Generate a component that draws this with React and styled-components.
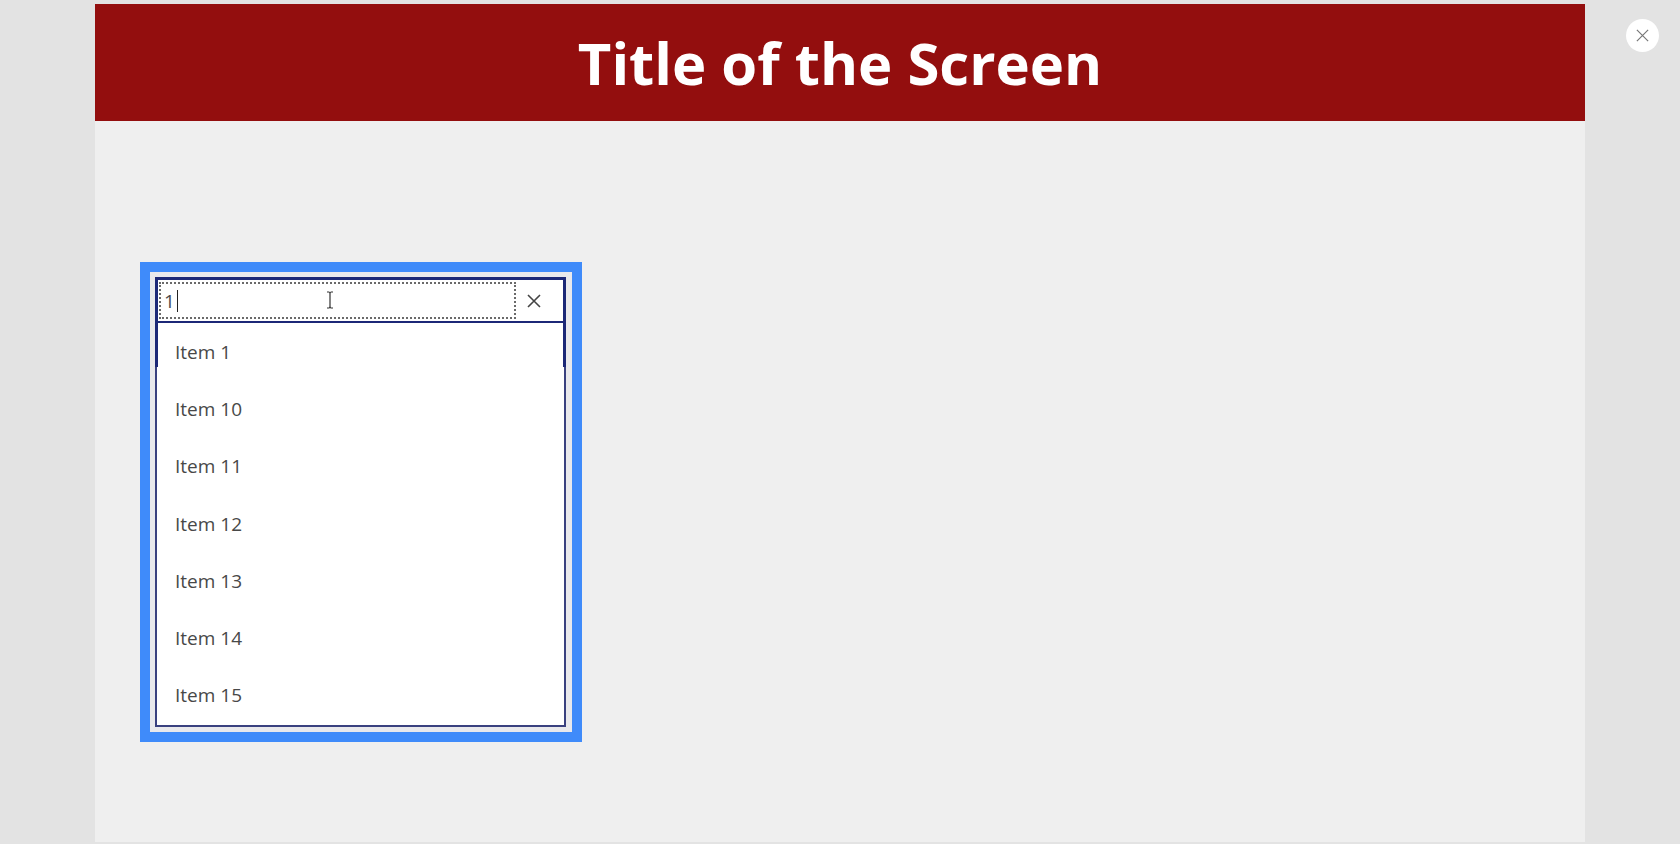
import React from 'react';
import styled, { createGlobalStyle } from 'styled-components';

const GlobalStyle = createGlobalStyle`
  html, body {
    margin: 0;
    padding: 0;
    background: #e3e3e3;
    font-family: "Open Sans", "Noto Sans", sans-serif;
  }
`;

const Page = styled.div`
  display: flex;
  width: 1680px;
  height: 844px;
  overflow: hidden;
`;

const Gutter = styled.div`
  width: 95px;
  flex-shrink: 0;
  padding: 19px 0 0 ${props => props.inset || 0}px;
  box-sizing: border-box;
`;

const Canvas = styled.div`
  display: flex;
  flex-direction: column;
  width: 1490px;
  margin-top: 4px;
  height: 838px;
  background: #efefef;
`;

const Header = styled.header`
  display: flex;
  align-items: center;
  justify-content: center;
  height: 117px;
  flex-shrink: 0;
  background: #930e0e;
`;

const Title = styled.h1`
  margin: 0;
  color: #ffffff;
  font-size: 58px;
  font-weight: 700;
  letter-spacing: 0;
  line-height: 1;
`;

const Body = styled.main`
  padding: 141px 0 0 45px;
`;

const SelectionFrame = styled.div`
  position: relative;
  width: 442px;
  height: 480px;
  box-sizing: border-box;
  border: 10px solid #3f8bfa;
  padding: 5px 6px 5px 5px;
  background: #e9e9ec;
`;

const Combo = styled.div`
  display: flex;
  flex-direction: column;
  height: 100%;
  box-sizing: border-box;
  background: #ffffff;
`;

const SearchRow = styled.div`
  display: flex;
  align-items: center;
  height: 46px;
  box-sizing: border-box;
  border: 3px solid #1c2877;
  border-bottom-width: 2px;
  padding: 3px 0 3px 1px;
`;

const SearchField = styled.div`
  position: relative;
  display: flex;
  align-items: center;
  width: 357px;
  height: 37px;
  box-sizing: border-box;
  border: 2px dotted #6a6a6a;
  padding-left: 3px;
  font-size: 19px;
  color: #4a4a4a;
`;

const Caret = styled.span`
  display: inline-block;
  width: 1px;
  height: 22px;
  margin-left: 2px;
  background: #222;
`;

const Cursor = styled.svg`
  position: absolute;
  left: 165px;
  top: 7px;
`;

const ClearButton = styled.button`
  display: flex;
  align-items: center;
  justify-content: center;
  flex: 1;
  height: 100%;
  border: none;
  background: transparent;
  padding: 0 11px 0 0;
  cursor: pointer;
`;

const List = styled.ul`
  position: relative;
  flex: 1;
  margin: 0;
  padding: 0;
  list-style: none;
  border: 2px solid #3a417f;
  border-top: none;

  &::before {
    content: '';
    position: absolute;
    left: -2px;
    top: 0;
    width: 3px;
    height: 44px;
    background: #1c2877;
  }
  &::after {
    content: '';
    position: absolute;
    right: -2px;
    top: 0;
    width: 3px;
    height: 44px;
    background: #1c2877;
  }
`;

const Item = styled.li`
  display: flex;
  align-items: center;
  height: 57.3px;
  padding-left: 18px;
  font-size: 19px;
  color: #484848;
`;

const CloseCircle = styled.button`
  display: flex;
  align-items: center;
  justify-content: center;
  width: 33px;
  height: 33px;
  border-radius: 50%;
  border: none;
  background: #ffffff;
  padding: 0;
  cursor: pointer;
`;

const items = ['Item 1', 'Item 10', 'Item 11', 'Item 12', 'Item 13', 'Item 14', 'Item 15'];

function XIcon({ size, color, width }) {
  return (
    <svg width={size} height={size} viewBox="0 0 16 16">
      <path d="M2 2 L14 14 M14 2 L2 14" stroke={color} strokeWidth={width} fill="none" />
    </svg>
  );
}

export default function App() {
  return (
    <>
      <GlobalStyle />
      <Page>
        <Gutter />
        <Canvas>
          <Header>
            <Title>Title of the Screen</Title>
          </Header>
          <Body>
            <SelectionFrame>
              <Combo>
                <SearchRow>
                  <SearchField>
                    1<Caret />
                    <Cursor width="8" height="18" viewBox="0 0 8 18">
                      <path d="M1 1 H3 Q4 1 4 3 V15 Q4 17 3 17 H1 M7 1 H5 Q4 1 4 3 M4 15 Q4 17 5 17 H7" stroke="#333" strokeWidth="1.2" fill="none" />
                    </Cursor>
                  </SearchField>
                  <ClearButton aria-label="Clear">
                    <XIcon size={16} color="#444" width={1.6} />
                  </ClearButton>
                </SearchRow>
                <List>
                  {items.map(item => (
                    <Item key={item}>{item}</Item>
                  ))}
                </List>
              </Combo>
            </SelectionFrame>
          </Body>
        </Canvas>
        <Gutter inset={41}>
          <CloseCircle aria-label="Close">
            <XIcon size={15} color="#777" width={1.3} />
          </CloseCircle>
        </Gutter>
      </Page>
    </>
  );
}
